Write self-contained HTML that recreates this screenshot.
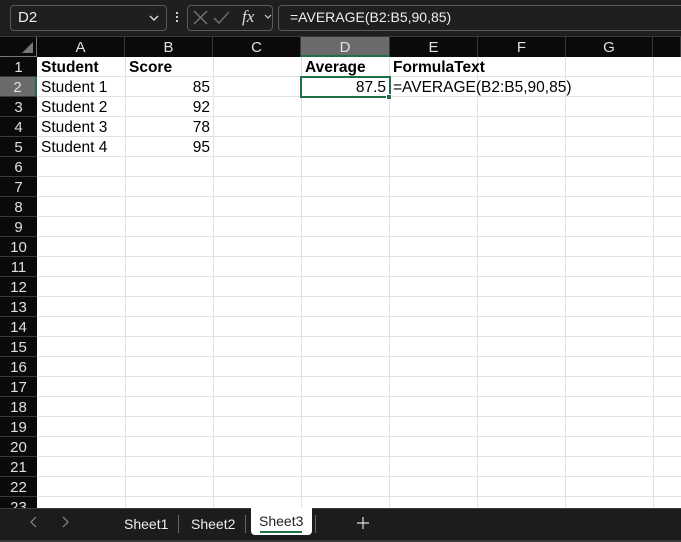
<!DOCTYPE html>
<html><head><style>
*{margin:0;padding:0;box-sizing:border-box}
body{width:681px;height:542px;overflow:hidden;background:#fff;font-family:"Liberation Sans",Arial,sans-serif;position:relative}
.a{position:absolute}
.top{left:0;top:0;width:681px;height:37px;background:#1f1f1f;border-bottom:1px solid #3a3a3a}
.box{border:1px solid #5a5a5a;border-radius:4px;height:26px;top:5px}
.ch{top:37px;height:20px;background:#0a0a0a;color:#e0e0e0;font-size:15px;text-align:center;line-height:21px;border-right:1px solid #3a3a3a}
.rh{left:0;width:37px;height:20px;background:#0a0a0a;color:#e0e0e0;font-size:15px;text-align:center;line-height:21px;border-bottom:1px solid #3a3a3a}
.vl{top:57px;width:1px;height:451px;background:#e1e1e1}
.hl{left:37px;width:644px;height:1px;background:#e1e1e1}
.t{font-size:15.5px;color:#000;line-height:21px;height:20px;white-space:nowrap}
.b{font-weight:bold}
.r{text-align:right}
</style></head><body>
<div class="a top"></div>
<div class="a box" style="left:10px;width:157px"></div>
<div class="a" style="left:18px;top:9px;color:#eee;font-size:15px">D2</div>
<svg class="a" style="left:148px;top:13px" width="12" height="10"><path d="M2 3l4 4 4-4" stroke="#ddd" stroke-width="1.4" fill="none"/></svg>
<div class="a" style="left:176px;top:12px;width:2px;height:2px;background:#ccc;box-shadow:0 4px #ccc,0 8px #ccc"></div>
<div class="a box" style="left:187px;width:86px"></div>
<svg class="a" style="left:192px;top:10px" width="80" height="16"><path d="M2 1l13 13M15 1L2 14" stroke="#777" stroke-width="1.3"/><path d="M22 8l5 5 10-11" stroke="#777" stroke-width="1.3" fill="none"/><path d="M73 5l3 3 3-3" stroke="#ccc" stroke-width="1.2" fill="none"/></svg>
<div class="a" style="left:242px;top:7px;color:#ddd;font:italic 17px 'Liberation Serif',serif">fx</div>
<div class="a box" style="left:278px;width:410px"></div>
<div class="a" style="left:290px;top:9px;color:#eee;font-size:14px">=AVERAGE(B2:B5,90,85)</div>
<div class="a" style="left:0;top:37px;width:37px;height:20px;background:#0a0a0a;border-right:1px solid #777;border-bottom:1px solid #777"></div>
<svg class="a" style="left:22px;top:42px" width="12" height="12"><path d="M11 0V11H0Z" fill="#777"/></svg>
<div class="a ch" style="left:37px;width:88px">A</div>
<div class="a ch" style="left:125px;width:88px">B</div>
<div class="a ch" style="left:213px;width:88px">C</div>
<div class="a ch" style="left:301px;width:89px;background:#6b6b6b;border-bottom:2px solid #1e7145">D</div>
<div class="a ch" style="left:390px;width:88px">E</div>
<div class="a ch" style="left:478px;width:88px">F</div>
<div class="a ch" style="left:566px;width:87px">G</div>
<div class="a ch" style="left:653px;width:28px"></div>
<div class="a vl" style="left:125px"></div><div class="a vl" style="left:213px"></div><div class="a vl" style="left:301px"></div><div class="a vl" style="left:389px"></div><div class="a vl" style="left:477px"></div><div class="a vl" style="left:565px"></div><div class="a vl" style="left:653px"></div>
<div id="rows"></div>
<script>
var h='';for(var i=1;i<=23;i++){var y=57+(i-1)*20;h+='<div class="a hl" style="top:'+(y+19)+'px"></div><div class="a rh" style="top:'+y+'px;'+(i==2?'background:#6b6b6b;border-right:2px solid #1e7145;':'')+'">'+i+'</div>';}
document.getElementById('rows').innerHTML=h;
</script>
<div class="a t b" style="left:41px;top:57px">Student</div>
<div class="a t b" style="left:129px;top:57px">Score</div>
<div class="a t b" style="left:305px;top:57px">Average</div>
<div class="a t b" style="left:393px;top:57px">FormulaText</div>
<div class="a t" style="left:41px;top:77px">Student 1</div>
<div class="a t" style="left:41px;top:97px">Student 2</div>
<div class="a t" style="left:41px;top:117px">Student 3</div>
<div class="a t" style="left:41px;top:137px">Student 4</div>
<div class="a t r" style="left:125px;width:85px;top:77px">85</div>
<div class="a t r" style="left:125px;width:85px;top:97px">92</div>
<div class="a t r" style="left:125px;width:85px;top:117px">78</div>
<div class="a t r" style="left:125px;width:85px;top:137px">95</div>
<div class="a t r" style="left:301px;width:85px;top:77px">87.5</div>
<div class="a t" style="left:393px;top:77px">=AVERAGE(B2:B5,90,85)</div>
<div class="a" style="left:300px;top:76px;width:91px;height:22px;border:2px solid #1e7145"></div>
<div class="a" style="left:386px;top:94px;width:6px;height:6px;background:#1e7145;border:1px solid #fff"></div>
<div class="a" style="left:0;top:508px;width:681px;height:34px;background:#1e1c1a;border-top:1px solid #3a3a3a;border-bottom:2px solid #3a3a3a"></div>
<svg class="a" style="left:25px;top:515px" width="50" height="14"><path d="M11 2l-5 5 5 5M38 2l5 5-5 5" stroke="#888" stroke-width="1.2" fill="none"/></svg>
<div class="a" style="left:124px;top:516px;color:#eee;font-size:14px">Sheet1</div>
<div class="a" style="left:178px;top:515px;width:1px;height:18px;background:#666"></div>
<div class="a" style="left:191px;top:516px;color:#eee;font-size:14px">Sheet2</div>
<div class="a" style="left:245px;top:515px;width:1px;height:18px;background:#666"></div>
<div class="a" style="left:251px;top:508px;width:61px;height:27px;background:#fff;border-radius:0 0 4px 4px"></div>
<div class="a" style="left:259px;top:513px;color:#222;font-size:14px">Sheet3</div>
<div class="a" style="left:260px;top:531px;width:42px;height:2px;background:#1e7145"></div>
<div class="a" style="left:315px;top:515px;width:1px;height:18px;background:#666"></div>
<svg class="a" style="left:356px;top:516px" width="14" height="14"><path d="M7 1v12M1 7h12" stroke="#ddd" stroke-width="1.2"/></svg>
</body></html>
